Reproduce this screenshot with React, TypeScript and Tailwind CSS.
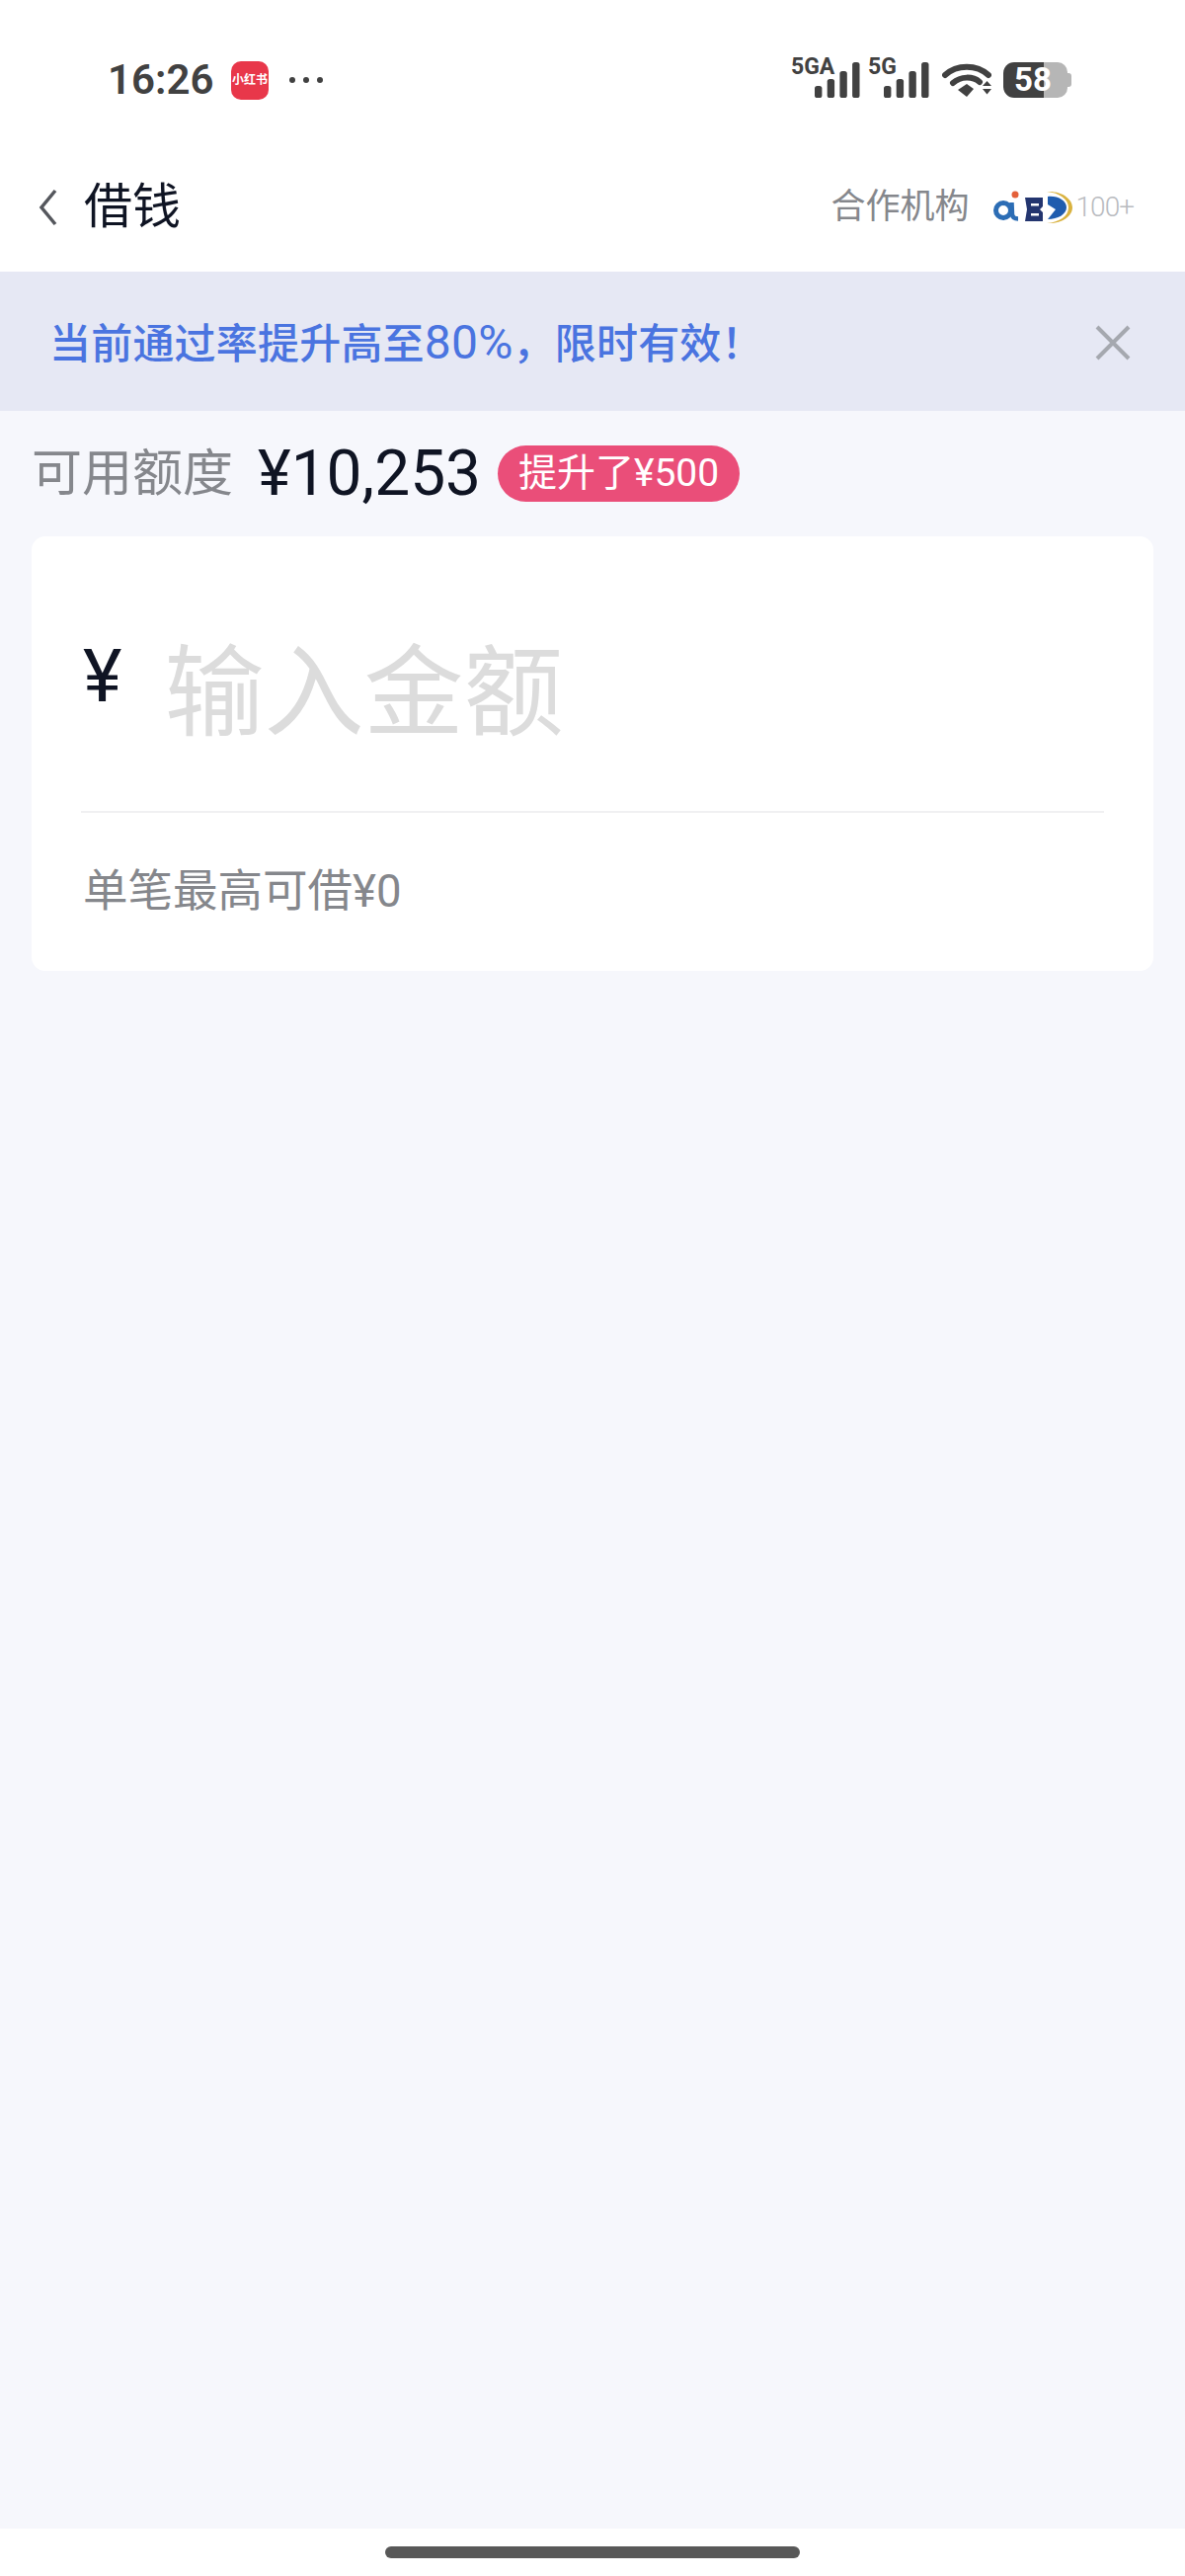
const cjk = "font-['Roboto','Noto_Sans_CJK_SC',sans-serif]"

function Signal({ label, width, barsFrom }: { label: string; width: number; barsFrom: number }) {
  const heights = [12, 19, 27, 36]
  return (
    <svg width={width} height={50} viewBox={`0 0 ${width} 50`} fill="#414141" className="-mt-2">
      <text x={0} y={23} fontFamily="Roboto, sans-serif" fontWeight={700} fontSize={23}>
        {label}
      </text>
      {heights.map((h, i) => (
        <rect key={i} x={barsFrom + i * 12.7} y={47 - h} width={7.4} height={h} rx={2.6} />
      ))}
    </svg>
  )
}

function Wifi() {
  return (
    <svg width={50} height={36} viewBox="0 0 50 36" fill="none">
      <path d="M3 13 C15 2 35 2 47 13" stroke="#414141" strokeWidth={6} strokeLinecap="round" />
      <path d="M11 21 C19 14 31 14 38 20" stroke="#414141" strokeWidth={6} strokeLinecap="round" />
      <path d="M16 28 L25 22 L32 27 L25 35 Z" fill="#414141" />
      <path d="M41 24 L45.500 19 L50 24 Z M41 27 L50 27 L45.500 32.500 Z" fill="#414141" />
    </svg>
  )
}

function Battery() {
  return (
    <div className="relative flex h-[36px] w-[69px] items-center">
      <div className="h-full w-[41px] rounded-l-[11px] bg-[#414141]" />
      <div className="h-full w-[24px] rounded-r-[10px] bg-[#b6b6b6]" />
      <div className="h-[14px] w-[4px] rounded-r-[3px] bg-[#b6b6b6]" />
      <span className="absolute left-[11px] top-0 font-['Roboto',sans-serif] text-[33px] leading-[36px] font-bold text-white">
        58
      </span>
    </div>
  )
}

function PartnerLogos() {
  return (
    <svg width={82} height={36} viewBox="0 0 82 36">
      <circle cx={11} cy={21} r={7.500} fill="none" stroke="#2c6db5" strokeWidth={5} />
      <path d="M19.500 13 L20 25 Q20.500 29.500 26 29.500" fill="none" stroke="#2c6db5" strokeWidth={4.500} />
      <circle cx={23} cy={5} r={3.500} fill="#e4603a" />
      <path d="M33 8 H51 V17 L48 20 L51 23 V32 H33 L35 20 Z" fill="#23356f" />
      <rect x={39} y={14} width={8} height={2.500} fill="#ffffff" />
      <rect x={39} y={24} width={8} height={2.500} fill="#ffffff" />
      <path d="M55 2 C71 1 81 10 81 18 C81 27 70 35 55 34 C68 33 77 27 77 18 C77 10 68 3 55 2 Z" fill="#d9b23f" />
      <path d="M56 7 C66 6 75 11 75 18 C75 25 66 30 56 30 L64 20 L56 15 Z" fill="#1f5cae" />
    </svg>
  )
}

export default function App() {
  return (
    <div className={`flex min-h-[2608px] w-[1200px] flex-col bg-[#f6f7fc] ${cjk}`}>
      {/* status bar */}
      <div className="flex h-[162px] items-center justify-between bg-white pl-[109px] pr-[115px]">
        <div className="flex items-center">
          <span className="w-[125px] text-[42px] leading-none font-semibold text-[#414141]">16:26</span>
          <div className="flex h-[39px] w-[38px] items-center justify-center rounded-[10px] bg-[#e8374a] text-[12px] font-bold whitespace-nowrap text-white">
            小红书
          </div>
          <div className="ml-[21px] flex gap-[8px]">
            <span className="h-[6px] w-[6px] rounded-full bg-[#414141]" />
            <span className="h-[6px] w-[6px] rounded-full bg-[#414141]" />
            <span className="h-[6px] w-[6px] rounded-full bg-[#414141]" />
          </div>
        </div>
        <div className="flex items-center">
          <Signal label="5GA" width={70} barsFrom={24} />
          <div className="ml-[8px] flex">
            <Signal label="5G" width={62} barsFrom={16} />
          </div>
          <div className="ml-[13px] flex">
            <Wifi />
          </div>
          <div className="ml-[12px]">
            <Battery />
          </div>
        </div>
      </div>

      {/* nav */}
      <div className="flex h-[113px] items-center justify-between bg-white pr-[52px] pb-[18px] pl-[39px]">
        <div className="flex items-center">
          <svg width={19} height={38} viewBox="0 0 19 38" fill="none">
            <path d="M17 2 L3 19 L17 36" stroke="#55575d" strokeWidth={3.500} />
          </svg>
          <span className="ml-[27px] text-[49px] leading-none text-[#0f1423]">借钱</span>
        </div>
        <div className="flex items-center">
          <span className="text-[35px] leading-none text-[#85878c]">合作机构</span>
          <div className="ml-[23px] flex">
            <PartnerLogos />
          </div>
          <span className="ml-[3px] text-[28px] leading-none font-light tracking-[-1px] text-[#b9bbbf]">100+</span>
        </div>
      </div>

      {/* banner */}
      <div className="flex h-[141px] items-center justify-between bg-[#e6e8f4] pt-[3px] pr-[55px] pl-[50px]">
        <span className="flex items-baseline text-[42px] leading-none font-medium tracking-[0.2px] text-[#4a74e0]">
          当前通过率提升高至<span className="text-[48px] font-normal">80%</span>，限时有效！
        </span>
        <svg width={36} height={36} viewBox="0 0 36 36" fill="none">
          <path d="M2 2 L34 34 M34 2 L2 34" stroke="#a5a8af" strokeWidth={4} />
        </svg>
      </div>

      {/* quota */}
      <div className="flex h-[127px] items-center pl-[32px]">
        <span className="text-[51px] leading-none text-[#85878c]">可用额度</span>
        <span className="ml-[25px] text-[64px] leading-none text-[#0f1423]">¥10,253</span>
        <span className="ml-[17px] flex h-[57px] w-[245px] items-center justify-center rounded-full bg-[#ea4e79] text-[39px] leading-none text-white">
          提升了¥500
        </span>
      </div>

      {/* amount card */}
      <div className="mx-[32px] h-[440px] rounded-[14px] bg-white px-[50px]">
        <div className="flex h-[280px] items-center border-b-2 border-[#f0f0f2]">
          <span className="mt-[4px] ml-[2px] text-[75px] leading-none text-[#0f1423]">¥</span>
          <span className="mt-[40px] ml-[43px] text-[101px] leading-none text-[#dcdcdc]">输入金额</span>
        </div>
        <div className="flex h-[158px] items-center pt-[2px] pl-[2px] text-[45.5px] leading-none text-[#85878c]">
          单笔最高可借¥0
        </div>
      </div>

      <div className="flex-1" />

      {/* home indicator */}
      <div className="flex h-[48px] justify-center bg-white pt-[18px]">
        <div className="h-[12px] w-[420px] rounded-full bg-[#585858]" />
      </div>
    </div>
  )
}
